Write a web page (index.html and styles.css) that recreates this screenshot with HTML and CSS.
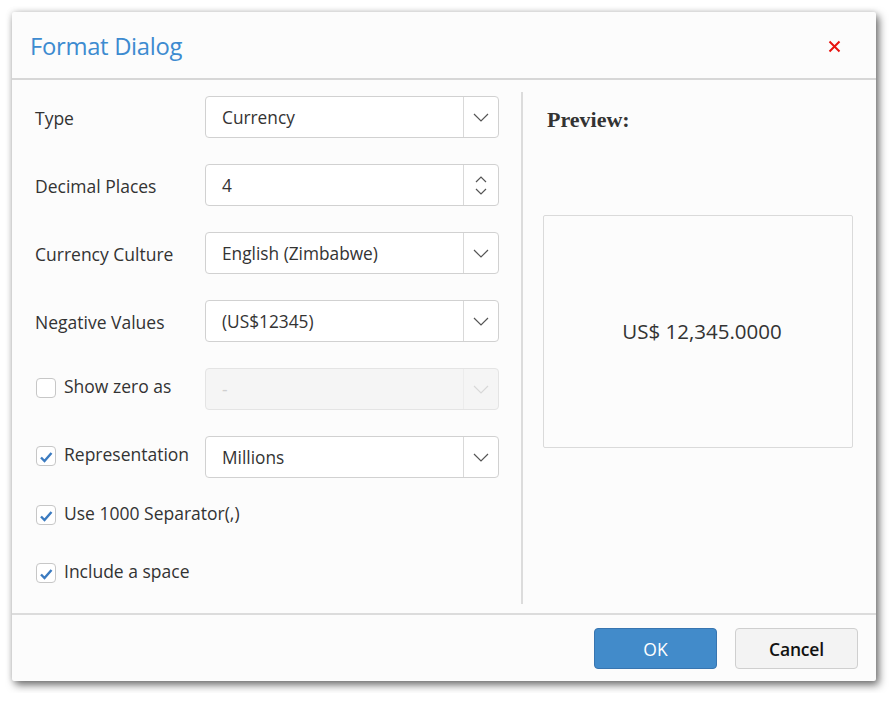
FILE: index.html
```html
<!DOCTYPE html>
<html>
<head>
<meta charset="utf-8">
<link rel="stylesheet" href="styles.css">
</head>
<body>
<div class="dialog">
  <div class="header">
    <div class="title">Format Dialog</div>
    <div class="close">
      <svg width="13" height="13" viewBox="0 0 13 13"><path d="M1.5 1.5 L11.5 11.5 M11.5 1.5 L1.5 11.5" stroke="#e8130f" stroke-width="2" fill="none"/></svg>
    </div>
  </div>
  <div class="body">
    <div class="form">
      <div class="row">
        <div class="label">Type</div>
        <div class="select"><div class="value">Currency</div><div class="btn"><svg width="16" height="9" viewBox="0 0 16 9"><path d="M1 1 L8 8 L15 1" stroke="#555" stroke-width="1.2" fill="none"/></svg></div></div>
      </div>
      <div class="row">
        <div class="label">Decimal Places</div>
        <div class="select"><div class="value">4</div><div class="btn spin"><svg width="12" height="7" viewBox="0 0 12 7"><path d="M1 6 L6 1 L11 6" stroke="#555" stroke-width="1.2" fill="none"/></svg><svg width="12" height="7" viewBox="0 0 12 7"><path d="M1 1 L6 6 L11 1" stroke="#555" stroke-width="1.2" fill="none"/></svg></div></div>
      </div>
      <div class="row">
        <div class="label">Currency Culture</div>
        <div class="select"><div class="value">English (Zimbabwe)</div><div class="btn"><svg width="16" height="9" viewBox="0 0 16 9"><path d="M1 1 L8 8 L15 1" stroke="#555" stroke-width="1.2" fill="none"/></svg></div></div>
      </div>
      <div class="row">
        <div class="label">Negative Values</div>
        <div class="select"><div class="value">(US$12345)</div><div class="btn"><svg width="16" height="9" viewBox="0 0 16 9"><path d="M1 1 L8 8 L15 1" stroke="#555" stroke-width="1.2" fill="none"/></svg></div></div>
      </div>
      <div class="row">
        <div class="label check-label"><span class="cb"></span>Show zero as</div>
        <div class="select disabled"><div class="value">-</div><div class="btn"><svg width="16" height="9" viewBox="0 0 16 9"><path d="M1 1 L8 8 L15 1" stroke="#d8d8d8" stroke-width="1.2" fill="none"/></svg></div></div>
      </div>
      <div class="row">
        <div class="label check-label"><span class="cb checked"><svg width="14" height="12" viewBox="0 0 14 12"><path d="M2 6.5 L5.5 10 L12.5 2" stroke="#3b7bc0" stroke-width="2.4" fill="none"/></svg></span>Representation</div>
        <div class="select"><div class="value">Millions</div><div class="btn"><svg width="16" height="9" viewBox="0 0 16 9"><path d="M1 1 L8 8 L15 1" stroke="#555" stroke-width="1.2" fill="none"/></svg></div></div>
      </div>
      <div class="row small first-small">
        <div class="label check-label"><span class="cb checked"><svg width="14" height="12" viewBox="0 0 14 12"><path d="M2 6.5 L5.5 10 L12.5 2" stroke="#3b7bc0" stroke-width="2.4" fill="none"/></svg></span>Use 1000 Separator(,)</div>
      </div>
      <div class="row small">
        <div class="label check-label"><span class="cb checked"><svg width="14" height="12" viewBox="0 0 14 12"><path d="M2 6.5 L5.5 10 L12.5 2" stroke="#3b7bc0" stroke-width="2.4" fill="none"/></svg></span>Include a space</div>
      </div>
    </div>
    <div class="divider"></div>
    <div class="preview">
      <div class="preview-title">Preview:</div>
      <div class="preview-box">US$ 12,345.0000</div>
    </div>
  </div>
  <div class="footer">
    <div class="button primary">OK</div>
    <div class="button secondary">Cancel</div>
  </div>
</div>
</body>
</html>
```
FILE: styles.css
```css
html, body {
  margin: 0;
  padding: 0;
  background: #ffffff;
}
body {
  padding: 12px;
  font-family: "Open Sans", "Noto Sans", sans-serif;
  color: #333;
}
.dialog {
  width: 864px;
  height: 669px;
  box-sizing: border-box;
  background: #fcfcfc;
  border-radius: 2px;
  box-shadow: 3px 4px 9px rgba(0,0,0,0.55), 0 0 6px rgba(0,0,0,0.15);
  display: flex;
  flex-direction: column;
}
.header {
  height: 66px;
  border-bottom: 2px solid #d7d7d7;
  display: flex;
  align-items: center;
  justify-content: space-between;
  padding: 0 35px 0 18px;
  flex: none;
}
.title {
  font-size: 23.8px;
  color: #3d8bd0;
  margin-top: 2px;
  letter-spacing: -0.3px;
}
.close {
  display: flex;
  margin-top: 2px;
}
.body {
  flex: 1;
  display: flex;
}
.form {
  width: 486px;
  padding: 16px 0 0 23px;
  display: flex;
  flex-direction: column;
  gap: 26px;
}
.row {
  display: flex;
  align-items: center;
  height: 42px;
}
.row.small {
  height: 32px;
}
.row.first-small {
  margin-top: -6px;
}
.label {
  width: 170px;
  flex: none;
  font-size: 17.5px;
  color: #333;
  display: flex;
  align-items: center;
  margin-top: 2px;
  white-space: nowrap;
}
.row.small .label {
  width: auto;
}
.check-label {
  margin-top: -7px;
}
.row.small .check-label {
  margin-top: -3px;
}
.cb {
  width: 18px;
  height: 18px;
  border: 1px solid #c7c7c7;
  border-radius: 4px;
  background: #fff;
  margin: 0 8px 0 1px;
  display: flex;
  align-items: center;
  justify-content: center;
  position: relative;
  top: 2px;
}
.cb svg {
  margin-top: 2px;
}
.select {
  width: 294px;
  height: 42px;
  box-sizing: border-box;
  border: 1px solid #d1d1d1;
  border-radius: 4px;
  background: #fff;
  display: flex;
}
.value {
  flex: 1;
  font-size: 17.3px;
  padding-left: 16px;
  display: flex;
  align-items: center;
  color: #333;
}
.btn {
  width: 34px;
  border-left: 1px solid #d9d9d9;
  display: flex;
  align-items: center;
  justify-content: center;
}
.btn.spin {
  flex-direction: column;
  gap: 5px;
}
.select.disabled {
  background: #f5f5f5;
  border-color: #e4e4e4;
}
.select.disabled .value {
  color: #cfcfcf;
}
.select.disabled .btn {
  border-left-color: #ececec;
}
.divider {
  width: 2px;
  background: #dcdcdc;
  margin: 12px 0 9px 0;
}
.preview {
  flex: 1;
  padding: 0 23px 0 20px;
  display: flex;
  flex-direction: column;
}
.preview-title {
  font-family: "Liberation Serif", serif;
  font-weight: bold;
  font-size: 22px;
  color: #333;
  margin: 27px 0 0 4px;
}
.preview-box {
  margin-top: 82px;
  height: 233px;
  box-sizing: border-box;
  border: 1px solid #dadada;
  border-radius: 2px;
  display: flex;
  justify-content: center;
  padding: 101px 0 0 8px;
  font-size: 20.5px;
  color: #333;
}
.footer {
  height: 66px;
  flex: none;
  border-top: 2px solid #dcdcdc;
  display: flex;
  justify-content: flex-end;
  align-items: center;
  gap: 18px;
  padding-right: 18px;
}
.button {
  width: 123px;
  height: 41px;
  box-sizing: border-box;
  border-radius: 4px;
  display: flex;
  align-items: center;
  justify-content: center;
  font-size: 17.5px;
  margin-top: 1px;
}
.primary {
  background: #428bca;
  border: 1px solid #3875b0;
  color: #fff;
}
.secondary {
  background: #f3f3f3;
  border: 1px solid #cfcfcf;
  color: #111;
  font-weight: 600;
  letter-spacing: -0.2px;
}
```
